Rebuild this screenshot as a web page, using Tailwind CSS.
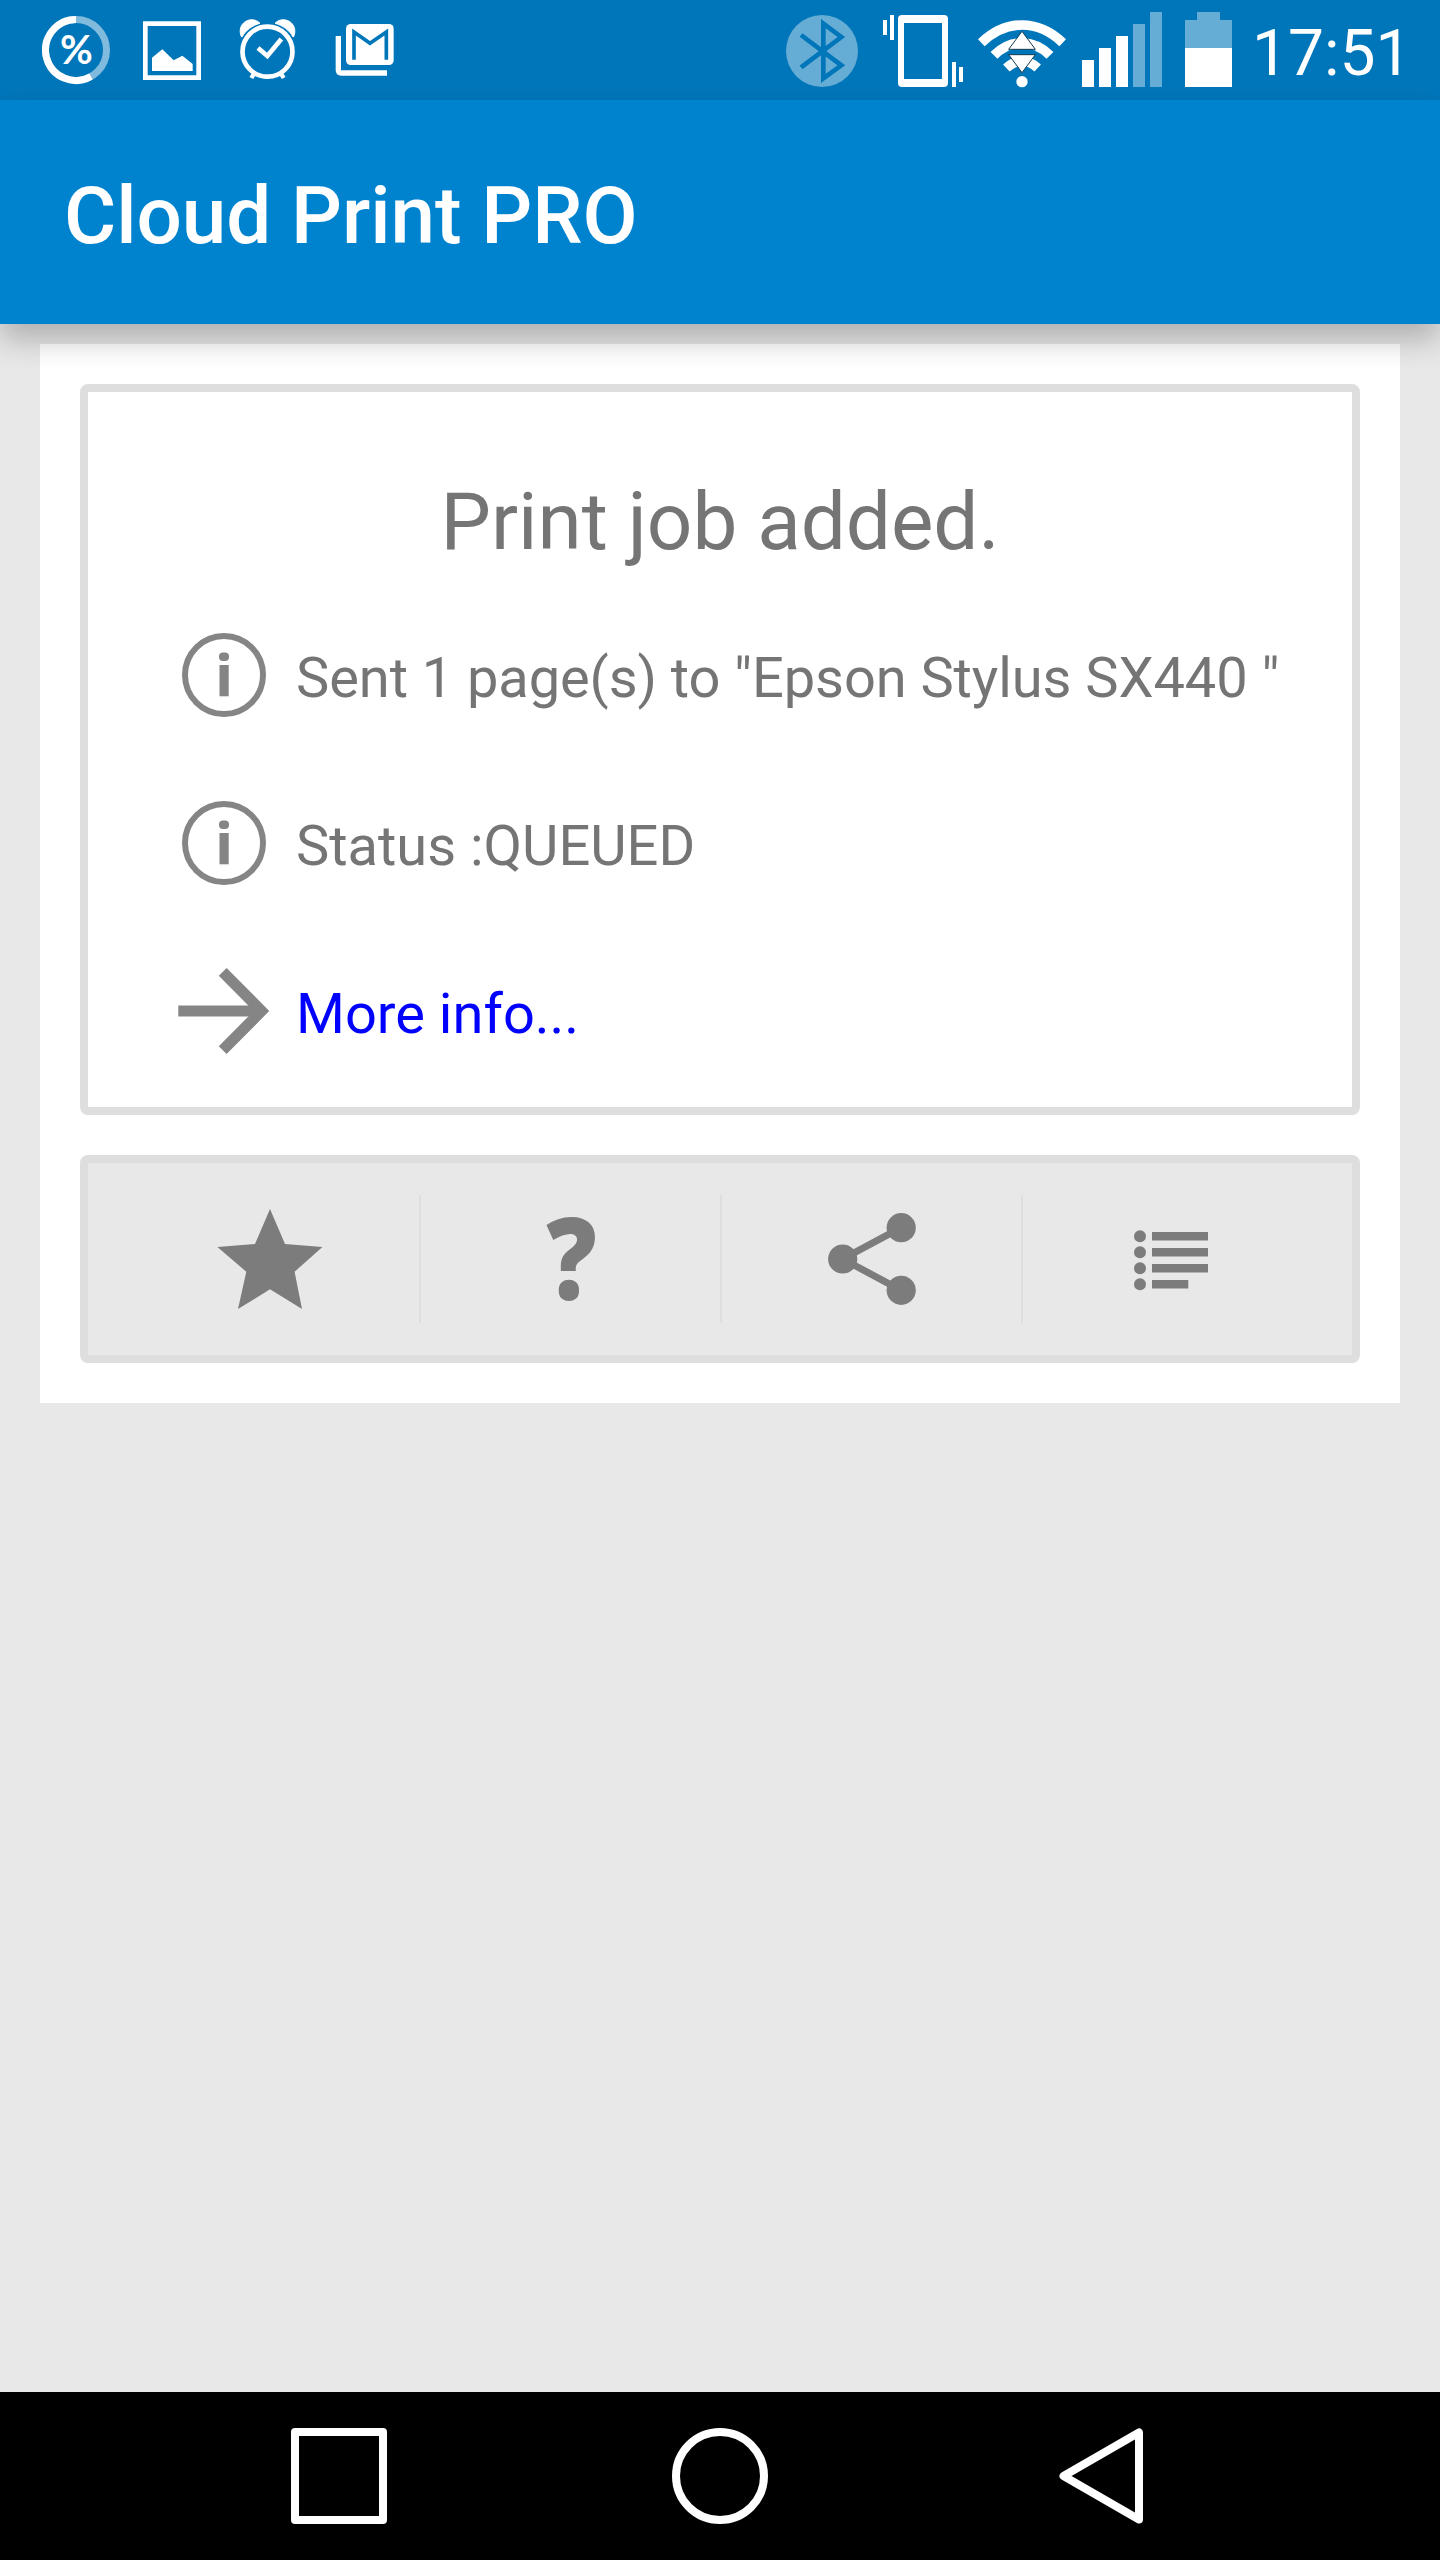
<!DOCTYPE html>
<html lang="en">
<head>
    <meta charset="UTF-8">
    <meta name="viewport" content="width=device-width, initial-scale=1.0">
    <title>Cloud Print PRO</title>
    <script src="https://cdn.jsdelivr.net/npm/@tailwindcss/browser@4"></script>
</head>
<body class="bg-[#e8e8e8]">
<div class="flex flex-col w-[1440px] h-[2560px] overflow-hidden bg-[#e8e8e8] font-['Roboto',sans-serif]">

    <!-- status bar -->
    <div class="relative z-10 flex shrink-0 h-[100px] bg-[#0076ba] text-white">
        <div class="flex pl-[42px]">
            <svg class="w-[68px] h-[100px]" viewBox="126 0 204 300" fill="none">
                <circle cx="228" cy="150" r="91.5" stroke="#fff" stroke-opacity=".5" stroke-width="21"/>
                <path d="M228 58.500A91.500 91.500 0 1 0 273 229.700" stroke="#fff" stroke-width="21"/>
                <text x="229" y="193" text-anchor="middle" fill="#fff" font-family="Lato" font-weight="700" font-size="120">%</text>
            </svg>
            <svg class="ml-[33px] w-[58px] h-[100px]" viewBox="429 0 174 300">
                <path d="M436 71H596V233H436Z" fill="none" stroke="#fff" stroke-width="14"/>
                <path d="M456 173L487 148L521 181L547 167L578 192V213H456Z" fill="#fff"/>
            </svg>
            <svg class="ml-[38px] w-[57px] h-[100px]" viewBox="718 0 171 300" fill="none" stroke="#fff">
                <path d="M725 110C708 68 757 44 781 70C758 76 738 90 727 111Z" fill="#fff" stroke-width="3"/>
                <path d="M882 110C899 68 850 44 826 70C849 76 869 90 880 111Z" fill="#fff" stroke-width="3"/>
                <circle cx="803.500" cy="155" r="75" stroke-width="14"/>
                <path d="M775 144L803 168L845 117" stroke-width="14"/>
                <path d="M764 219L755 234M843 219L852 234" stroke-width="13"/>
            </svg>
            <svg class="ml-[38px] w-[62px] h-[100px]" viewBox="1002 0 186 300">
                <path d="M1015 108V210Q1015 219 1024 219H1161" fill="none" stroke="#fff" stroke-width="16"/>
                <rect x="1038" y="72" width="143" height="123" rx="14" fill="#fff"/>
                <path d="M1062 179V96L1110 130L1159 96V179" fill="none" stroke="#0076ba" stroke-width="11"/>
                <path d="M1066 90H1154L1110 120Z" fill="#fff"/>
            </svg>
        </div>
        <div class="flex ml-auto">
            <svg class="w-[72px] h-[100px]" viewBox="48 0 216 300">
                <circle cx="156" cy="153" r="108" fill="#66add6"/>
                <path d="M93 105L214 196L160 235V71L214 111L93 202" fill="none" stroke="#0076ba" stroke-width="14"/>
            </svg>
            <svg class="ml-[25px] w-[80px] h-[100px]" viewBox="339 0 240 300" fill="#fff">
                <path d="M339 60h12v45h-12zM360 45h12v75h-12zM546 186h12v75h-12zM567 201h12v45h-12z"/>
                <path fill-rule="evenodd" d="M396 45H522Q534 45 534 57V249Q534 261 522 261H396Q384 261 384 249V57Q384 45 396 45ZM402 69V237H516V69Z"/>
            </svg>
            <svg class="ml-[15px] w-[88px] h-[100px]" viewBox="624 0 264 300">
                <g fill="none" stroke="#fff" stroke-width="29">
                    <path d="M634 128Q690 75 756 75T878 128"/>
                    <path d="M672 166Q709 129 756 129T840 166"/>
                    <path d="M709 204Q732 183 756 183T803 204"/>
                </g>
                <circle cx="756" cy="245" r="17" fill="#fff"/>
                <path d="M720 155H792V158H720Z" fill="#0076ba" stroke="#0076ba" stroke-width="8"/>
                <path d="M756 94L796 148H716ZM716 164H796L756 218Z" fill="#fff" stroke="#123a52" stroke-width="3"/>
            </svg>
            <svg class="ml-[16px] w-[80px] h-[100px]" viewBox="66 0 240 300" shape-rendering="crispEdges">
                <path d="M66 180h36v81h-36zM117 144h36v117h-36zM168 108h36v153h-36z" fill="#fff"/>
                <path d="M219 72h36v189h-36zM270 36h36v225h-36z" fill="#66add6"/>
            </svg>
            <svg class="ml-[23px] w-[47px] h-[100px]" viewBox="375 0 141 300" shape-rendering="crispEdges">
                <path d="M375 60H411V36H480V60H516V144H375Z" fill="#66add6"/>
                <path d="M375 144H516V261H375Z" fill="#fff"/>
            </svg>
            <span class="ml-[20px] mr-[28px] w-[160px] pt-[6px] text-[64px] leading-[95px] whitespace-nowrap">17:51</span>
        </div>
    </div>

    <!-- app bar -->
    <header class="relative z-10 flex shrink-0 items-center h-[224px] pl-[64px] pt-[8px] bg-[#0083cf] shadow-[0_16px_28px_rgba(0,0,0,0.24)]">
        <h1 class="text-[80px] leading-[94px] font-medium text-white tracking-[-0.08px] whitespace-nowrap">Cloud Print PRO</h1>
    </header>

    <main class="grow">
        <div class="flex flex-col gap-10 mx-10 mt-5 p-10 bg-white">
            <section class="h-[731px] border-8 border-[#dedede] rounded-lg text-[#757575]">
                <h2 class="mt-[83px] text-center text-[80px] leading-[94px] whitespace-nowrap">Print job added.</h2>
                <ul class="mt-[25px] text-[56px] leading-[66px] whitespace-nowrap">
                    <li class="flex items-center h-[168px] pl-[88px]">
                        <svg class="w-[96px] h-[96px] mr-[24px] mb-[6px]" viewBox="0 0 96 96" fill="#858585">
                            <circle cx="48" cy="48" r="39" fill="none" stroke="#858585" stroke-width="6"/>
                            <rect x="43" y="25.500" width="10" height="8.500" rx="4"/>
                            <rect x="43.500" y="38" width="9.200" height="31.300"/>
                        </svg>
                        <span class="tracking-[-0.08px]">Sent 1 page(s) to "Epson Stylus SX440 "</span>
                    </li>
                    <li class="flex items-center h-[168px] pl-[88px]">
                        <svg class="w-[96px] h-[96px] mr-[24px] mb-[6px]" viewBox="0 0 96 96" fill="#858585">
                            <circle cx="48" cy="48" r="39" fill="none" stroke="#858585" stroke-width="6"/>
                            <rect x="43" y="25.500" width="10" height="8.500" rx="4"/>
                            <rect x="43.500" y="38" width="9.200" height="31.300"/>
                        </svg>
                        <span>Status :QUEUED</span>
                    </li>
                    <li class="flex items-center h-[168px] pl-[88px]">
                        <svg class="w-[96px] h-[96px] mr-[24px] mb-[6px]" viewBox="0 0 96 96" fill="none" stroke="#858585" stroke-width="11">
                            <path d="M2.300 48H85"/>
                            <path d="M46.700 8.800L85.500 48L46.700 87.200"/>
                        </svg>
                        <a href="#" class="text-[#0000ff]">More info...</a>
                    </li>
                </ul>
            </section>

            <nav class="flex items-center h-[208px] pl-[31px] border-8 border-[#dedede] rounded-lg bg-[#e8e8e8]">
                <a href="#" class="flex justify-center w-[300px]">
                    <svg class="w-[128px] h-[128px]" viewBox="205 1195 128 128" fill="#7c7c7c">
                        <path d="M270 1209L285 1244L322.400 1247L294.600 1271.700L302 1309L270 1289.300L238 1309L246.300 1271.700L217.400 1247L255 1244Z"/>
                    </svg>
                </a>
                <i class="w-[2px] h-[128px] bg-[#dedede]"></i>
                <a href="#" class="flex justify-center w-[299px]">
                    <svg class="w-[128px] h-[168px]" viewBox="507 1175 128 168">
                        <text transform="translate(571.5 1300) scale(.88 1)" text-anchor="middle" fill="#7c7c7c" font-family="Open Sans" font-weight="800" font-size="113">?</text>
                    </svg>
                </a>
                <i class="w-[2px] h-[128px] bg-[#dedede]"></i>
                <a href="#" class="flex justify-center w-[299px]">
                    <svg class="w-[128px] h-[128px]" viewBox="808 1195 128 128" fill="#7c7c7c">
                        <path d="M901.200 1227.700L842.700 1259L901.200 1290.300" fill="none" stroke="#7c7c7c" stroke-width="7"/>
                        <circle cx="842.700" cy="1259" r="14.600"/>
                        <circle cx="901.200" cy="1227.700" r="14.600"/>
                        <circle cx="901.200" cy="1290.300" r="14.600"/>
                    </svg>
                </a>
                <i class="w-[2px] h-[128px] bg-[#dedede]"></i>
                <a href="#" class="flex justify-center w-[299px]">
                    <svg class="w-[128px] h-[128px]" viewBox="1109 1195 128 128" fill="#7c7c7c">
                        <circle cx="1140" cy="1236.300" r="6"/>
                        <circle cx="1140" cy="1252.300" r="6"/>
                        <circle cx="1140" cy="1268.300" r="6"/>
                        <circle cx="1140" cy="1284.300" r="6"/>
                        <path d="M1152 1232h56v8.600h-56zM1152 1248h56v8.600h-56zM1152 1264h56v8.600h-56zM1152 1280h36.300v8.600h-36.300z"/>
                    </svg>
                </a>
            </nav>
        </div>
    </main>

    <!-- system navigation -->
    <footer class="flex shrink-0 items-center h-[168px] pl-[291px] bg-black">
        <div class="w-[96px] h-[96px] border-8 border-white rounded"></div>
        <div class="ml-[285px] w-[96px] h-[96px] border-8 border-white rounded-full"></div>
        <svg class="ml-[291px] w-[84px] h-[96px]" viewBox="0 0 84 96">
            <path d="M80 4.500V91.500L4.500 48Z" fill="none" stroke="#fff" stroke-width="8" stroke-linejoin="round"/>
        </svg>
    </footer>
</div>
</body>
</html>
